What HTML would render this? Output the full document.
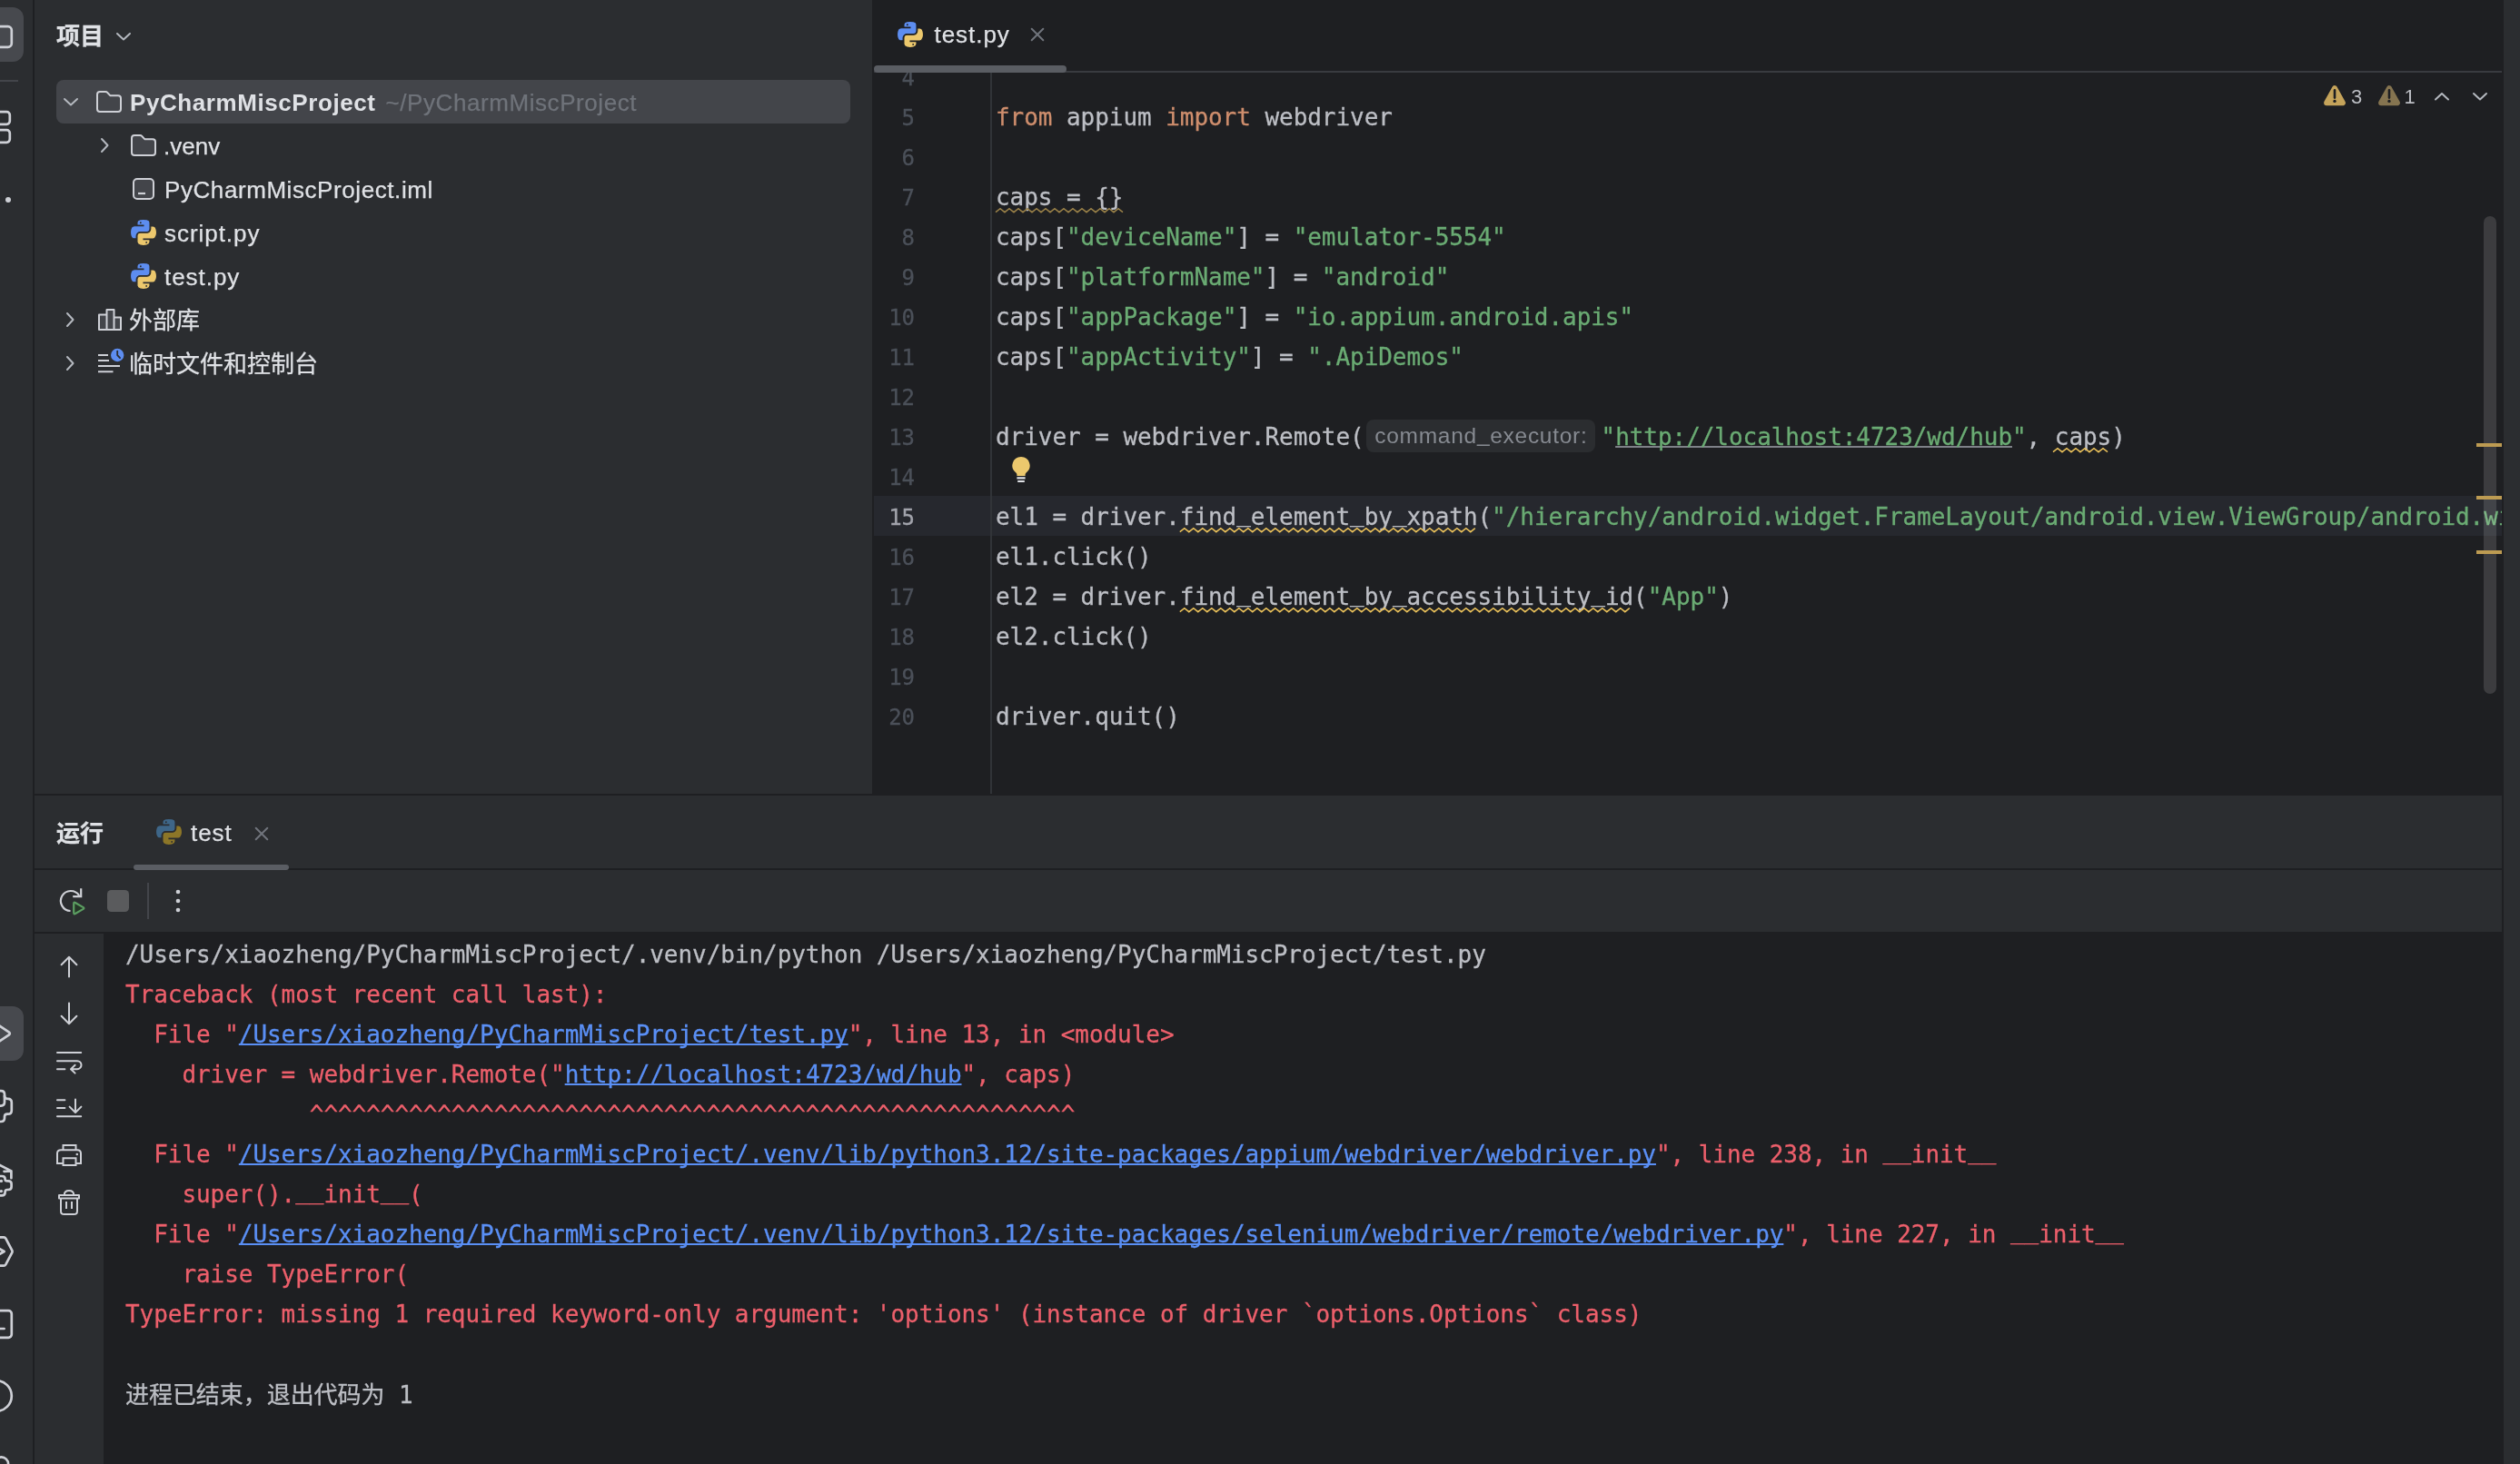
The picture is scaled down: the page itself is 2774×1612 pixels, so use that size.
<!DOCTYPE html>
<html lang="zh-CN">
<head>
<meta charset="utf-8">
<title>PyCharm</title>
<style>
*{box-sizing:border-box;margin:0;padding:0}
html,body{width:2774px;height:1612px;overflow:hidden;background:#2b2d30}
body{filter:brightness(1);position:relative;font-family:"Liberation Sans","Noto Sans CJK SC",sans-serif;font-size:26px;color:#dfe1e5;-webkit-font-smoothing:antialiased}
.abs{position:absolute}
svg{position:absolute;overflow:visible}
svg.py{overflow:hidden}
.ui{position:absolute;white-space:nowrap;line-height:48px;height:48px;margin-top:1px;-webkit-text-stroke:.25px currentColor}
.ui b,b.ui{-webkit-text-stroke:0}
.mono{font-family:"DejaVu Sans Mono","Liberation Mono","Noto Sans CJK SC",monospace;font-size:26px;letter-spacing:-.052px;-webkit-text-stroke:.3px currentColor}
/* ---------- left strip ---------- */
#strip{left:0;top:0;width:36px;height:1612px;background:#2b2d30;overflow:hidden}
#stripb{left:36px;top:0;width:2px;height:1612px;background:#1e1f22}
.sbtn{position:absolute;left:-34px;width:60px;height:60px;border-radius:12px;background:#47494e}
/* ---------- project panel ---------- */
#proj{left:38px;top:0;width:922px;height:874px;background:#2b2d30;overflow:hidden}
#hsplit{left:38px;top:874px;width:2718px;height:2px;background:#1e1f22}
.sel{position:absolute;left:24px;top:88px;width:874px;height:48px;border-radius:8px;background:#43454a}
.gray{color:#6f737a}
/* ---------- editor ---------- */
#editor{left:960px;top:0;width:1796px;height:874px;background:#1e1f22;overflow:hidden}
#rstrip{left:2756px;top:0;width:18px;height:1612px;background:#2b2d30}
.ln,.cl,.co{margin-top:-2px}
.ln{position:absolute;left:0;width:47px;font-size:24px!important;margin-top:-1px!important;text-align:right;color:#4b5059;height:44px;line-height:44px;white-space:pre}
.cl{position:absolute;left:136px;height:44px;line-height:44px;white-space:pre;color:#bcbec4}
.hint{-webkit-text-stroke:0;display:inline-block;vertical-align:top;height:36px;line-height:36px;margin:3px 6.5px 0 2.4px;width:252px;text-align:center;border-radius:8px;background:#2b2d30;color:#868a91;font-family:"Liberation Sans",sans-serif;font-size:24.5px;letter-spacing:.72px;text-indent:.7px}
.eu{text-decoration:underline;text-decoration-color:#7e8188;text-decoration-thickness:2px;text-underline-offset:.5px;text-decoration-skip-ink:none}
.us{position:relative;top:-4.5px}
.hint .us{top:-2px}
.k{color:#cf8e6d}.s{color:#6aab73}
.u{text-decoration:underline;text-decoration-thickness:2px;text-underline-offset:4px}
/* ---------- run panel ---------- */
#run{left:38px;top:876px;width:2716px;height:736px;background:#2b2d30;overflow:hidden}
#console{left:76px;top:152px;width:2640px;height:584px;background:#1e1f22;overflow:hidden}
.co{position:absolute;left:24px;height:44px;line-height:44px;white-space:pre;color:#ec5f6b}
.lk{color:#5a8ff5;text-decoration:underline;text-decoration-thickness:2px;text-underline-offset:.5px;text-decoration-skip-ink:none}
.n{color:#bcbec4}
</style>
</head>
<body>
<!-- LEFT STRIP -->
<div id="strip" class="abs">
<div class="sbtn" style="top:8px"></div>
<div class="sbtn" style="top:1108px"></div>
<div class="abs" style="left:0;top:88px;width:20px;height:2px;background:#43454a"></div>
<svg width="36" height="1612" viewBox="0 0 36 1612" fill="none" stroke="#ced0d6" stroke-width="2.7" stroke-linejoin="round" stroke-linecap="round" style="left:0;top:0">
<rect x="-26" y="29.2" width="38.8" height="22.6" rx="4"/>
<rect x="-20" y="123.2" width="30.8" height="13.6" rx="3.5"/>
<rect x="-20" y="143.2" width="30.8" height="13.6" rx="3.5"/>
<circle cx="9" cy="220" r="3" fill="#ced0d6" stroke="none"/>
<path d="M-2 1128.5 L10 1136.6 Q11.6 1138 10 1139.4 L-2 1147.5"/>
<path d="M-2 1201.2 H1 Q5 1201.2 5 1205 V1206.8 Q5 1209.8 8 1209.8 H8.8 Q12.8 1209.8 12.8 1214 V1222.4 Q12.8 1226.6 8.8 1226.6 H8 Q5 1226.6 5 1229.5 V1231 Q5 1235 1 1235 H-2"/>
<path d="M5 1206.8 V1213.6 Q5 1217.6 1 1217.6 H-2"/>
<path d="M-2 1282 L12.4 1289.4 V1297.2 M4.5 1289.8 L12.4 1289.4"/>
<path d="M-2 1295 H2 Q5.6 1295 5.6 1298 V1298.5 Q5.6 1300.4 8 1300.4 H9 Q12.6 1300.4 12.6 1303.6 V1306.8 Q12.6 1310 9 1310 H8 Q5.6 1310 5.6 1312.4 V1313 Q5.6 1316.4 2 1316.4 H-2"/>
<circle cx="1.4" cy="1300.4" r="1.7" fill="#ced0d6" stroke="none"/>
<circle cx="1.4" cy="1311.6" r="1.7" fill="#ced0d6" stroke="none"/>
<path d="M-2 1362.4 H4.2 Q5.6 1362.4 6.3 1363.6 L13.2 1376.6 Q13.9 1378 13.2 1379.4 L6.3 1392.4 Q5.6 1393.6 4.2 1393.6 H-2"/>
<path d="M-3 1373.6 L4.6 1378 L-3 1382.4"/>
<rect x="-22" y="1443.2" width="34.8" height="29.6" rx="3.5"/>
<path d="M-2 1463 H4.6"/>
<circle cx="-4" cy="1537" r="16.8"/>
<circle cx="1.5" cy="1612" r="7.6"/>
</svg>
</div>
<div id="stripb" class="abs"></div>
<!-- PROJECT PANEL -->
<div id="proj" class="abs">
<div class="sel"></div>
<div class="ui" id="t_proj" style="left:24px;top:15px;font-weight:bold">项目</div>
<svg width="18" height="11" viewBox="0 0 18 11" fill="none" stroke="#b4b8bf" stroke-width="2" stroke-linecap="round" stroke-linejoin="round" style="left:89.0px;top:35.0px"><path d="M2 2 L9 8.5 L16 2"/></svg>
<svg width="18" height="11" viewBox="0 0 18 11" fill="none" stroke="#b4b8bf" stroke-width="2" stroke-linecap="round" stroke-linejoin="round" style="left:31.0px;top:107.0px"><path d="M2 2 L9 8.5 L16 2"/></svg>
<svg width="28" height="24" viewBox="0 0 28 24" fill="#43454a" stroke="#ced0d6" stroke-width="2" stroke-linejoin="round" style="left:68px;top:100px"><path d="M1 4 Q1 1 4 1 H10.2 Q11.4 1 12.2 1.9 L15.2 5.2 H24 Q27 5.2 27 8.2 V20 Q27 23 24 23 H4 Q1 23 1 20 Z"/></svg>
<div class="ui" id="t_root" style="left:105px;top:88px"><b id="t_rootb" style="letter-spacing:.58px">PyCharmMiscProject</b><span class="gray" id="t_path" style="margin-left:11px;letter-spacing:.57px">~/PyCharmMiscProject</span></div>
<svg width="11" height="18" viewBox="0 0 11 18" fill="none" stroke="#b4b8bf" stroke-width="2" stroke-linecap="round" stroke-linejoin="round" style="left:72.3px;top:151.0px"><path d="M2 2 L8.5 9 L2 16"/></svg>
<svg width="28" height="24" viewBox="0 0 28 24" fill="#43454a" stroke="#ced0d6" stroke-width="2" stroke-linejoin="round" style="left:106px;top:148px"><path d="M1 4 Q1 1 4 1 H10.2 Q11.4 1 12.2 1.9 L15.2 5.2 H24 Q27 5.2 27 8.2 V20 Q27 23 24 23 H4 Q1 23 1 20 Z"/></svg>
<div class="ui" id="t_venv" style="left:142px;top:136px">.venv</div>
<svg width="24" height="24" viewBox="0 0 24 24" fill="#43454a" stroke="#ced0d6" stroke-width="2" style="left:108px;top:196px"><rect x="1" y="1" width="22" height="22" rx="4"/><path d="M6 17 H14" stroke-width="2.2"/></svg>
<div class="ui" id="t_iml" style="letter-spacing:.576px;left:143px;top:184px">PyCharmMiscProject.iml</div>
<svg class="py" width="28" height="28" viewBox="2 2 107.2 108.6" preserveAspectRatio="none" stroke="#2b2d30" stroke-width="4" style="left:106px;top:242px"><path fill="#5d8df0" d="M54.9 0C50.3 0 46 .4 42.1 1.1 30.8 3.1 28.7 7.3 28.7 15v10.2h26.8v3.4H18.7c-7.8 0-14.6 4.7-16.8 13.6-2.5 10.2-2.6 16.6 0 27.2 1.9 7.9 6.5 13.6 14.2 13.6h9.2V70.8c0-8.8 7.7-16.6 16.8-16.6h26.8c7.5 0 13.4-6.1 13.4-13.6V15c0-7.3-6.1-12.7-13.4-13.9C64.3.3 59.5 0 54.9 0z"/><path fill="#ecc86d" d="M85.6 28.7v11.9c0 9.2-7.8 17-16.8 17H42.1c-7.3 0-13.4 6.3-13.4 13.6v25.5c0 7.3 6.3 11.5 13.4 13.6 8.5 2.5 16.6 2.9 26.8 0 6.8-2 13.4-5.9 13.4-13.6V86.5H55.5v-3.4h40.2c7.8 0 10.7-5.4 13.4-13.6 2.8-8.4 2.7-16.5 0-27.2-1.9-7.7-5.6-13.6-13.4-13.6H85.6z"/><circle cx="43.4" cy="14.4" r="3.7" fill="#2b2d30" stroke="none"/><circle cx="67.8" cy="98.6" r="3.7" fill="#2b2d30" stroke="none"/></svg>
<div class="ui" id="t_script" style="letter-spacing:.95px;left:143px;top:232px">script.py</div>
<svg class="py" width="28" height="28" viewBox="2 2 107.2 108.6" preserveAspectRatio="none" stroke="#2b2d30" stroke-width="4" style="left:106px;top:290px"><path fill="#5d8df0" d="M54.9 0C50.3 0 46 .4 42.1 1.1 30.8 3.1 28.7 7.3 28.7 15v10.2h26.8v3.4H18.7c-7.8 0-14.6 4.7-16.8 13.6-2.5 10.2-2.6 16.6 0 27.2 1.9 7.9 6.5 13.6 14.2 13.6h9.2V70.8c0-8.8 7.7-16.6 16.8-16.6h26.8c7.5 0 13.4-6.1 13.4-13.6V15c0-7.3-6.1-12.7-13.4-13.9C64.3.3 59.5 0 54.9 0z"/><path fill="#ecc86d" d="M85.6 28.7v11.9c0 9.2-7.8 17-16.8 17H42.1c-7.3 0-13.4 6.3-13.4 13.6v25.5c0 7.3 6.3 11.5 13.4 13.6 8.5 2.5 16.6 2.9 26.8 0 6.8-2 13.4-5.9 13.4-13.6V86.5H55.5v-3.4h40.2c7.8 0 10.7-5.4 13.4-13.6 2.8-8.4 2.7-16.5 0-27.2-1.9-7.7-5.6-13.6-13.4-13.6H85.6z"/><circle cx="43.4" cy="14.4" r="3.7" fill="#2b2d30" stroke="none"/><circle cx="67.8" cy="98.6" r="3.7" fill="#2b2d30" stroke="none"/></svg>
<div class="ui" id="t_test" style="letter-spacing:.95px;left:143px;top:280px">test.py</div>
<svg width="11" height="18" viewBox="0 0 11 18" fill="none" stroke="#b4b8bf" stroke-width="2" stroke-linecap="round" stroke-linejoin="round" style="left:34.3px;top:343.0px"><path d="M2 2 L8.5 9 L2 16"/></svg>
<svg width="28" height="26" viewBox="0 0 28 26" fill="#43454a" stroke="#ced0d6" stroke-width="2" stroke-linejoin="round" style="left:69px;top:339px"><path d="M2 7.5 H10.5 V24 H2 Z M10.5 2 H18.5 V24 H10.5 Z M18.5 10.5 H26 V24 H18.5 Z"/></svg>
<div class="ui" id="t_lib" style="left:104px;top:328px">外部库</div>
<svg width="11" height="18" viewBox="0 0 11 18" fill="none" stroke="#b4b8bf" stroke-width="2" stroke-linecap="round" stroke-linejoin="round" style="left:34.3px;top:391.0px"><path d="M2 2 L8.5 9 L2 16"/></svg>
<svg width="32" height="32" viewBox="0 0 32 32" fill="none" stroke="#ced0d6" stroke-width="2" style="left:69px;top:382px"><path d="M1 9 H12 M1 15 H13 M1 21 H25 M1 27.2 H17.5"/><circle cx="22.2" cy="9" r="7.2" fill="#5d8df0" stroke="none"/><path d="M22.2 4.6 V9.2 L25 12" stroke="#2b2d30" stroke-width="1.8" stroke-linecap="round" stroke-linejoin="round"/></svg>
<div class="ui" id="t_scr" style="left:104px;top:376px">临时文件和控制台</div>
</div>
<!-- EDITOR -->
<div id="editor" class="abs">
<div class="abs" style="left:2px;top:546px;width:1792px;height:44px;background:#26282e"></div>
<div class="abs" style="left:130px;top:80px;width:2px;height:794px;background:#313438"></div>
<div class="ln mono" style="top:65px;color:#4b5059">4</div>
<div class="ln mono" style="top:109px;color:#4b5059">5</div>
<div class="ln mono" style="top:153px;color:#4b5059">6</div>
<div class="ln mono" style="top:197px;color:#4b5059">7</div>
<div class="ln mono" style="top:241px;color:#4b5059">8</div>
<div class="ln mono" style="top:285px;color:#4b5059">9</div>
<div class="ln mono" style="top:329px;color:#4b5059">10</div>
<div class="ln mono" style="top:373px;color:#4b5059">11</div>
<div class="ln mono" style="top:417px;color:#4b5059">12</div>
<div class="ln mono" style="top:461px;color:#4b5059">13</div>
<div class="ln mono" style="top:505px;color:#4b5059">14</div>
<div class="ln mono" style="top:549px;color:#a1a3ab">15</div>
<div class="ln mono" style="top:593px;color:#4b5059">16</div>
<div class="ln mono" style="top:637px;color:#4b5059">17</div>
<div class="ln mono" style="top:681px;color:#4b5059">18</div>
<div class="ln mono" style="top:725px;color:#4b5059">19</div>
<div class="ln mono" style="top:769px;color:#4b5059">20</div>
<div class="cl mono" id="c5" style="top:109px"><span class="k">from</span> appium <span class="k">import</span> webdriver</div>
<div class="cl mono" id="c7" style="top:197px">caps = {}</div>
<div class="cl mono" id="c8" style="top:241px">caps[<span class="s">"deviceName"</span>] = <span class="s">"emulator-5554"</span></div>
<div class="cl mono" id="c9" style="top:285px">caps[<span class="s">"platformName"</span>] = <span class="s">"android"</span></div>
<div class="cl mono" id="c10" style="top:329px">caps[<span class="s">"appPackage"</span>] = <span class="s">"io.appium.android.apis"</span></div>
<div class="cl mono" id="c11" style="top:373px">caps[<span class="s">"appActivity"</span>] = <span class="s">".ApiDemos"</span></div>
<div class="cl mono" id="c13" style="top:461px">driver = webdriver.Remote(<span class="hint">command<span class="us">_</span>executor:</span><span class="s">"<span class="eu">http://localhost:4723/wd/hub</span>"</span>, caps)</div>
<div class="cl mono" id="c15" style="top:549px;width:1658px;overflow:hidden">el1 = driver.find<span class="us">_</span>element<span class="us">_</span>by<span class="us">_</span>xpath(<span class="s">"/hierarchy/android.widget.FrameLayout/android.view.ViewGroup/android.widget.FrameLayout/android.widget.LinearLayout"</span>)</div>
<div class="cl mono" id="c16" style="top:593px">el1.click()</div>
<div class="cl mono" id="c17" style="top:637px">el2 = driver.find<span class="us">_</span>element<span class="us">_</span>by<span class="us">_</span>accessibility<span class="us">_</span>id(<span class="s">"App"</span>)</div>
<div class="cl mono" id="c18" style="top:681px">el2.click()</div>
<div class="cl mono" id="c20" style="top:769px">driver.quit()</div>
<svg width="1796" height="874" viewBox="960 0 1796 874" style="left:0;top:0">
<polyline points="1096.0,233.7 1101.0,229.7 1106.0,233.7 1111.0,229.7 1116.0,233.7 1121.0,229.7 1126.0,233.7 1131.0,229.7 1136.0,233.7 1141.0,229.7 1146.0,233.7 1151.0,229.7 1156.0,233.7 1161.0,229.7 1166.0,233.7 1171.0,229.7 1176.0,233.7 1181.0,229.7 1186.0,233.7 1191.0,229.7 1196.0,233.7 1201.0,229.7 1206.0,233.7 1211.0,229.7 1216.0,233.7 1221.0,229.7 1226.0,233.7 1231.0,229.7 1236.0,233.7" fill="none" stroke="#9a8148" stroke-width="1.5" stroke-linejoin="miter"/>
<polyline points="2260.0,497.7 2265.0,493.7 2270.0,497.7 2275.0,493.7 2280.0,497.7 2285.0,493.7 2290.0,497.7 2295.0,493.7 2300.0,497.7 2305.0,493.7 2310.0,497.7 2315.0,493.7 2320.0,497.7" fill="none" stroke="#e9c05a" stroke-width="1.5" stroke-linejoin="miter"/>
<polyline points="1298.8,585.7 1303.8,581.7 1308.8,585.7 1313.8,581.7 1318.8,585.7 1323.8,581.7 1328.8,585.7 1333.8,581.7 1338.8,585.7 1343.8,581.7 1348.8,585.7 1353.8,581.7 1358.8,585.7 1363.8,581.7 1368.8,585.7 1373.8,581.7 1378.8,585.7 1383.8,581.7 1388.8,585.7 1393.8,581.7 1398.8,585.7 1403.8,581.7 1408.8,585.7 1413.8,581.7 1418.8,585.7 1423.8,581.7 1428.8,585.7 1433.8,581.7 1438.8,585.7 1443.8,581.7 1448.8,585.7 1453.8,581.7 1458.8,585.7 1463.8,581.7 1468.8,585.7 1473.8,581.7 1478.8,585.7 1483.8,581.7 1488.8,585.7 1493.8,581.7 1498.8,585.7 1503.8,581.7 1508.8,585.7 1513.8,581.7 1518.8,585.7 1523.8,581.7 1528.8,585.7 1533.8,581.7 1538.8,585.7 1543.8,581.7 1548.8,585.7 1553.8,581.7 1558.8,585.7 1563.8,581.7 1568.8,585.7 1573.8,581.7 1578.8,585.7 1583.8,581.7 1588.8,585.7 1593.8,581.7 1598.8,585.7 1603.8,581.7 1608.8,585.7 1613.8,581.7 1618.8,585.7 1623.8,581.7" fill="none" stroke="#e9c05a" stroke-width="1.5" stroke-linejoin="miter"/>
<polyline points="1298.8,673.7 1303.8,669.7 1308.8,673.7 1313.8,669.7 1318.8,673.7 1323.8,669.7 1328.8,673.7 1333.8,669.7 1338.8,673.7 1343.8,669.7 1348.8,673.7 1353.8,669.7 1358.8,673.7 1363.8,669.7 1368.8,673.7 1373.8,669.7 1378.8,673.7 1383.8,669.7 1388.8,673.7 1393.8,669.7 1398.8,673.7 1403.8,669.7 1408.8,673.7 1413.8,669.7 1418.8,673.7 1423.8,669.7 1428.8,673.7 1433.8,669.7 1438.8,673.7 1443.8,669.7 1448.8,673.7 1453.8,669.7 1458.8,673.7 1463.8,669.7 1468.8,673.7 1473.8,669.7 1478.8,673.7 1483.8,669.7 1488.8,673.7 1493.8,669.7 1498.8,673.7 1503.8,669.7 1508.8,673.7 1513.8,669.7 1518.8,673.7 1523.8,669.7 1528.8,673.7 1533.8,669.7 1538.8,673.7 1543.8,669.7 1548.8,673.7 1553.8,669.7 1558.8,673.7 1563.8,669.7 1568.8,673.7 1573.8,669.7 1578.8,673.7 1583.8,669.7 1588.8,673.7 1593.8,669.7 1598.8,673.7 1603.8,669.7 1608.8,673.7 1613.8,669.7 1618.8,673.7 1623.8,669.7 1628.8,673.7 1633.8,669.7 1638.8,673.7 1643.8,669.7 1648.8,673.7 1653.8,669.7 1658.8,673.7 1663.8,669.7 1668.8,673.7 1673.8,669.7 1678.8,673.7 1683.8,669.7 1688.8,673.7 1693.8,669.7 1698.8,673.7 1703.8,669.7 1708.8,673.7 1713.8,669.7 1718.8,673.7 1723.8,669.7 1728.8,673.7 1733.8,669.7 1738.8,673.7 1743.8,669.7 1748.8,673.7 1753.8,669.7 1758.8,673.7 1763.8,669.7 1768.8,673.7 1773.8,669.7 1778.8,673.7 1783.8,669.7 1788.8,673.7 1793.8,669.7" fill="none" stroke="#e9c05a" stroke-width="1.5" stroke-linejoin="miter"/>
</svg>
<svg width="20" height="30" viewBox="0 0 20 30" style="left:154px;top:503px"><path d="M10 0 a9.6 9.6 0 0 1 5.6 17.4 q-1 .8 -1 2.2 v1.4 h-9.2 v-1.4 q0 -1.4 -1 -2.2 A9.6 9.6 0 0 1 10 0z" fill="#ecc86d"/><path d="M5.4 23.4 h9.2 M6.2 27 h7.6" stroke="#dfe1e5" stroke-width="2.2" fill="none"/></svg>
<div class="abs" style="left:0;top:0;width:1796px;height:80px;background:#1e1f22"></div>
<div class="abs" style="left:2px;top:78px;width:1792px;height:2px;background:#393b40"></div>
<div class="abs" style="left:2px;top:72px;width:212px;height:8px;border-radius:4px;background:#5a5d63"></div>
<svg class="py" width="28" height="28" viewBox="2 2 107.2 108.6" preserveAspectRatio="none" stroke="#1e1f22" stroke-width="4" style="left:28px;top:24px"><path fill="#5d8df0" d="M54.9 0C50.3 0 46 .4 42.1 1.1 30.8 3.1 28.7 7.3 28.7 15v10.2h26.8v3.4H18.7c-7.8 0-14.6 4.7-16.8 13.6-2.5 10.2-2.6 16.6 0 27.2 1.9 7.9 6.5 13.6 14.2 13.6h9.2V70.8c0-8.8 7.7-16.6 16.8-16.6h26.8c7.5 0 13.4-6.1 13.4-13.6V15c0-7.3-6.1-12.7-13.4-13.9C64.3.3 59.5 0 54.9 0z"/><path fill="#ecc86d" d="M85.6 28.7v11.9c0 9.2-7.8 17-16.8 17H42.1c-7.3 0-13.4 6.3-13.4 13.6v25.5c0 7.3 6.3 11.5 13.4 13.6 8.5 2.5 16.6 2.9 26.8 0 6.8-2 13.4-5.9 13.4-13.6V86.5H55.5v-3.4h40.2c7.8 0 10.7-5.4 13.4-13.6 2.8-8.4 2.7-16.5 0-27.2-1.9-7.7-5.6-13.6-13.4-13.6H85.6z"/><circle cx="43.4" cy="14.4" r="3.7" fill="#1e1f22" stroke="none"/><circle cx="67.8" cy="98.6" r="3.7" fill="#1e1f22" stroke="none"/></svg>
<div class="ui" id="t_tab" style="left:68.5px;top:13px;letter-spacing:.95px">test.py</div>
<svg width="16" height="16" viewBox="0 0 16 16" style="left:174px;top:30px" fill="none" stroke="#70747c" stroke-width="2" stroke-linecap="round"><path d="M1.7 1.7 L14.3 14.3 M14.3 1.7 L1.7 14.3"/></svg>
<svg width="26" height="24" viewBox="0 0 26 24" style="left:1597px;top:93px"><path d="M13 4.2 L21.9 20.3 L4.1 20.3 Z" fill="#c5a35a" stroke="#c5a35a" stroke-width="6" stroke-linejoin="round"/><path d="M13 6.4 v8.2" stroke="#1e1f22" stroke-width="2.6" stroke-linecap="round"/><circle cx="13" cy="18.4" r="1.7" fill="#1e1f22"/></svg>
<div class="abs" id="w3" style="left:1628px;top:90.5px;font-size:22px;line-height:32px;color:#bcbec4">3</div>
<svg width="26" height="24" viewBox="0 0 26 24" style="left:1657px;top:93px"><path d="M13 4.2 L21.9 20.3 L4.1 20.3 Z" fill="#857450" stroke="#857450" stroke-width="6" stroke-linejoin="round"/><path d="M13 6.4 v8.2" stroke="#1e1f22" stroke-width="2.6" stroke-linecap="round"/><circle cx="13" cy="18.4" r="1.7" fill="#1e1f22"/></svg>
<div class="abs" id="w1" style="left:1686.5px;top:90.5px;font-size:22px;line-height:32px;color:#bcbec4">1</div>
<svg width="18" height="11" viewBox="0 0 18 11" fill="none" stroke="#b4b8bf" stroke-width="2" stroke-linecap="round" stroke-linejoin="round" style="left:1719px;top:101px"><path d="M2 8.5 L9 2 L16 8.5"/></svg>
<svg width="18" height="11" viewBox="0 0 18 11" fill="none" stroke="#b4b8bf" stroke-width="2" stroke-linecap="round" stroke-linejoin="round" style="left:1761px;top:100.8px"><path d="M2 2 L9 8.5 L16 2"/></svg>
<div class="abs" style="left:1774px;top:238px;width:14px;height:526px;border-radius:7px;background:rgba(255,255,255,.135)"></div>
<div class="abs" style="left:1766px;top:488px;width:28px;height:4px;background:#bd9b52"></div>
<div class="abs" style="left:1766px;top:546px;width:28px;height:4px;background:#bd9b52"></div>
<div class="abs" style="left:1766px;top:606px;width:28px;height:4px;background:#bd9b52"></div>
<div class="abs" style="left:1794px;top:0;width:2px;height:874px;background:#1e1f22"></div>
</div>
<div id="rstrip" class="abs"></div>
<div class="abs" style="left:2754px;top:0;width:2px;height:1612px;background:#1e1f22"></div>
<div id="hsplit" class="abs"></div>
<!-- RUN PANEL -->
<div id="run" class="abs">
<div class="abs" style="left:0;top:80px;width:2716px;height:2px;background:#1e1f22"></div>
<div class="abs" style="left:0;top:150px;width:2716px;height:2px;background:#1e1f22"></div>
<div class="abs" style="left:108.5px;top:76px;width:171.5px;height:6px;border-radius:3px;background:#5a5d63"></div>
<div class="ui" id="t_run" style="left:24px;top:17px;font-weight:bold">运行</div>
<svg class="py" width="28" height="28" viewBox="2 2 107.2 108.6" preserveAspectRatio="none" stroke="#2b2d30" stroke-width="4" style="left:134px;top:26px"><path fill="#3e6688" d="M54.9 0C50.3 0 46 .4 42.1 1.1 30.8 3.1 28.7 7.3 28.7 15v10.2h26.8v3.4H18.7c-7.8 0-14.6 4.7-16.8 13.6-2.5 10.2-2.6 16.6 0 27.2 1.9 7.9 6.5 13.6 14.2 13.6h9.2V70.8c0-8.8 7.7-16.6 16.8-16.6h26.8c7.5 0 13.4-6.1 13.4-13.6V15c0-7.3-6.1-12.7-13.4-13.9C64.3.3 59.5 0 54.9 0z"/><path fill="#8c7628" d="M85.6 28.7v11.9c0 9.2-7.8 17-16.8 17H42.1c-7.3 0-13.4 6.3-13.4 13.6v25.5c0 7.3 6.3 11.5 13.4 13.6 8.5 2.5 16.6 2.9 26.8 0 6.8-2 13.4-5.9 13.4-13.6V86.5H55.5v-3.4h40.2c7.8 0 10.7-5.4 13.4-13.6 2.8-8.4 2.7-16.5 0-27.2-1.9-7.7-5.6-13.6-13.4-13.6H85.6z"/><circle cx="43.4" cy="14.4" r="3.7" fill="#2b2d30" stroke="none"/><circle cx="67.8" cy="98.6" r="3.7" fill="#2b2d30" stroke="none"/></svg>
<div class="ui" id="t_rtab" style="left:172px;top:16px;letter-spacing:.95px">test</div>
<svg width="16" height="16" viewBox="0 0 16 16" style="left:241.7px;top:34.2px" fill="none" stroke="#70747c" stroke-width="2" stroke-linecap="round"><path d="M1.7 1.7 L14.3 14.3 M14.3 1.7 L1.7 14.3"/></svg>
<svg width="2716" height="736" viewBox="38 876 2716 736" style="left:0;top:0" fill="none" stroke="#ced0d6" stroke-width="2.2" stroke-linecap="round" stroke-linejoin="round">
<path d="M87.13 986.01 A11 11 0 1 0 77.52 1002.99" stroke-linecap="butt"/>
<path d="M89.2 978.2 V987.2 H80.2" stroke-linecap="butt" stroke-linejoin="miter"/>
<path d="M81.2 995 Q81.2 993.1 82.9 994 L91.7 999.1 Q93 1000 91.7 1000.9 L82.9 1006 Q81.2 1006.9 81.2 1005 Z" fill="#253627" stroke="#5b9d61" stroke-width="2.2"/>
<rect x="118" y="980" width="24" height="24" rx="4.5" fill="#5a5b5d" stroke="none"/>
<rect x="162" y="972" width="2" height="40" fill="#43454a" stroke="none"/>
<circle cx="196" cy="982" r="2.3" fill="#ced0d6" stroke="none"/>
<circle cx="196" cy="992" r="2.3" fill="#ced0d6" stroke="none"/>
<circle cx="196" cy="1002" r="2.3" fill="#ced0d6" stroke="none"/>
<path d="M76 1054 V1075.5 M67.6 1062.2 L76 1053.8 L84.4 1062.2" stroke-width="2"/>
<path d="M76 1104.5 V1127 M67.6 1118.8 L76 1127.2 L84.4 1118.8" stroke-width="2"/>
<path d="M63 1159 H89.2 M63 1168.2 H85 A4.5 4.5 0 0 1 85 1177.2 H78.4 M82.6 1172.8 L78 1177.2 L82.6 1181.6 M63 1177.2 H71.4" stroke-width="2"/>
<path d="M63 1211.3 H71.4 M63 1220 H71.4 M63 1229.2 H89.2 M83 1210.5 V1224.6 M76.6 1218.6 L83 1225 L89.4 1218.6" stroke-width="2"/>
<path d="M69.5 1266 V1261 H83.5 V1266 M69.5 1281 H63 V1270 Q63 1266.2 67 1266.2 H85 Q89 1266.2 89 1270 V1281 H83.5 M69.5 1275.2 H83.5 V1283 H69.5 Z" stroke-width="2" stroke-linejoin="miter" stroke-linecap="butt"/>
<circle cx="84.8" cy="1271" r="1.3" fill="#ced0d6" stroke="none"/>
<path d="M70.8 1315.6 Q70.8 1311 76 1311 Q81.2 1311 81.2 1315.6 M65 1316 H87 V1319.6 H65 Z M67 1319.8 V1333.4 Q67 1337 70.6 1337 H81.4 Q85 1337 85 1333.4 V1319.8 M73 1323 V1331 M79 1323 V1331" stroke-width="2" stroke-linecap="butt"/>
</svg>
<div id="console" class="abs">
<div class="co mono" id="o0" style="top:3px"><span class="n">/Users/xiaozheng/PyCharmMiscProject/.venv/bin/python /Users/xiaozheng/PyCharmMiscProject/test.py</span></div>
<div class="co mono" id="o1" style="top:47px">Traceback (most recent call last):</div>
<div class="co mono" id="o2" style="top:91px">  File "<span class="lk">/Users/xiaozheng/PyCharmMiscProject/test.py</span>", line 13, in &lt;module&gt;</div>
<div class="co mono" id="o3" style="top:135px">    driver = webdriver.Remote("<span class="lk">http://localhost:4723/wd/hub</span>", caps)</div>
<div class="co mono" id="o4" style="top:179px">             ^^^^^^^^^^^^^^^^^^^^^^^^^^^^^^^^^^^^^^^^^^^^^^^^^^^^^^</div>
<div class="co mono" id="o5" style="top:223px">  File "<span class="lk">/Users/xiaozheng/PyCharmMiscProject/.venv/lib/python3.12/site-packages/appium/webdriver/webdriver.py</span>", line 238, in <span class="us">_</span><span class="us">_</span>init<span class="us">_</span><span class="us">_</span></div>
<div class="co mono" id="o6" style="top:267px">    super().<span class="us">_</span><span class="us">_</span>init<span class="us">_</span><span class="us">_</span>(</div>
<div class="co mono" id="o7" style="top:311px">  File "<span class="lk">/Users/xiaozheng/PyCharmMiscProject/.venv/lib/python3.12/site-packages/selenium/webdriver/remote/webdriver.py</span>", line 227, in <span class="us">_</span><span class="us">_</span>init<span class="us">_</span><span class="us">_</span></div>
<div class="co mono" id="o8" style="top:355px">    raise TypeError(</div>
<div class="co mono" id="o9" style="top:399px">TypeError: missing 1 required keyword-only argument: 'options' (instance of driver `options.Options` class)</div>
<div class="co mono" id="o11" style="top:488px"><span class="n">进程已结束，退出代码为 1</span></div>
</div>
</div>
</body>
</html>
